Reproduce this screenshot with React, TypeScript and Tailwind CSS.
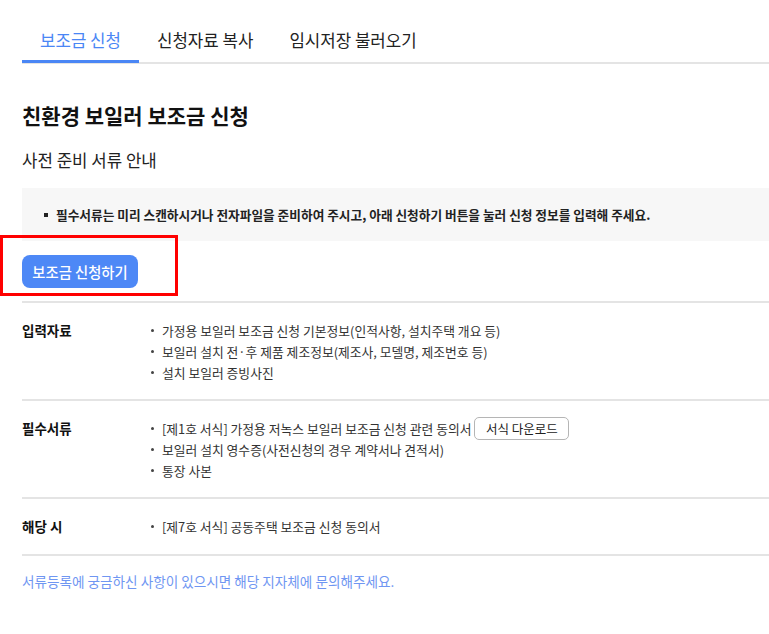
import React from "react";

const font = { fontFamily: '"Noto Sans CJK KR", "Noto Sans", sans-serif' };

function Bullet() {
  return (
    <span className="flex w-[12px] shrink-0 items-center">
      <span className="ml-[1px] inline-block h-[3px] w-[3px] rounded-full bg-[#444]" />
    </span>
  );
}

function Row({ label, items, pb }: { label: string; items: React.ReactNode[]; pb: string }) {
  return (
    <div className={`flex border-t-2 border-[#e4e4e4] pt-[17px] ${pb}`}>
      <div className="w-[128px] shrink-0 text-[13.5px] font-bold leading-[21px] text-[#111]">{label}</div>
      <div className="flex flex-col">
        {items.map((it, i) => (
          <div key={i} className="flex h-[21px] items-center text-[12.8px] leading-[21px] text-[#333]">
            <Bullet />
            {it}
          </div>
        ))}
      </div>
    </div>
  );
}

export default function App() {
  return (
    <div className="min-h-[634px] bg-white pl-[22px]" style={font}>
      <div className="flex border-b-2 border-[#e4e4e4]">
        <div className="-mb-[1px] border-b-[3px] border-[#4a86f5] px-[18px] pt-[28px] pb-[8px] text-[16.8px] leading-[24px] text-[#4a86f5]">
          보조금 신청
        </div>
        <div className="-mb-[1px] border-b-[3px] border-transparent px-[18px] pt-[28px] pb-[8px] text-[16.8px] leading-[24px] text-[#222]">
          신청자료 복사
        </div>
        <div className="-mb-[1px] border-b-[3px] border-transparent px-[18px] pt-[28px] pb-[8px] text-[16.8px] leading-[24px] text-[#222]">
          임시저장 불러오기
        </div>
      </div>

      <h1 className="mt-[36px] text-[21px] font-bold leading-[30px] text-[#111]">친환경 보일러 보조금 신청</h1>
      <h2 className="mt-[18px] text-[16.8px] leading-[24px] text-[#222]">사전 준비 서류 안내</h2>

      <div className="mt-[16px] flex h-[53px] items-center bg-[#f7f7f7] pl-[22px]">
        <span className="mr-[8px] inline-block h-[4px] w-[4px] bg-[#222]" />
        <span className="text-[12.7px] font-semibold text-[#222]">
          필수서류는 미리 스캔하시거나 전자파일을 준비하여 주시고, 아래 신청하기 버튼을 눌러 신청 정보를 입력해 주세요.
        </span>
      </div>

      <div className="relative mt-[14px] mb-[13px]">
        <button className="flex h-[33px] w-[116px] items-center justify-center rounded-[8px] bg-[#4d88f6] text-[14.3px] font-medium text-white">
          보조금 신청하기
        </button>
        <div className="absolute -left-[22px] -top-[20px] h-[61px] w-[178px] border-[3px] border-[#ff0000]" />
      </div>

      <Row
        pb="pb-[16px]"
        label="입력자료"
        items={[
          "가정용 보일러 보조금 신청 기본정보(인적사항, 설치주택 개요 등)",
          "보일러 설치 전·후 제품 제조정보(제조사, 모델명, 제조번호 등)",
          "설치 보일러 증빙사진",
        ]}
      />
      <Row
        pb="pb-[16px]"
        label="필수서류"
        items={[
          <>
            <span>[제1호 서식] 가정용 저녹스 보일러 보조금 신청 관련 동의서</span>
            <button className="ml-[3px] flex h-[23px] w-[95px] shrink-0 items-center justify-center rounded-[5px] border border-[#b5b5b5] bg-white text-[12.5px] text-[#222]">
              서식 다운로드
            </button>
          </>,
          "보일러 설치 영수증(사전신청의 경우 계약서나 견적서)",
          "통장 사본",
        ]}
      />
      <Row pb="pb-[17px]" label="해당 시" items={["[제7호 서식] 공동주택 보조금 신청 동의서"]} />
      <div className="border-t-2 border-[#e4e4e4]" />

      <p className="mt-[15px] text-[13.6px] leading-[21px] text-[#6f96f2]">
        서류등록에 궁금하신 사항이 있으시면 해당 지자체에 문의해주세요.
      </p>
    </div>
  );
}
